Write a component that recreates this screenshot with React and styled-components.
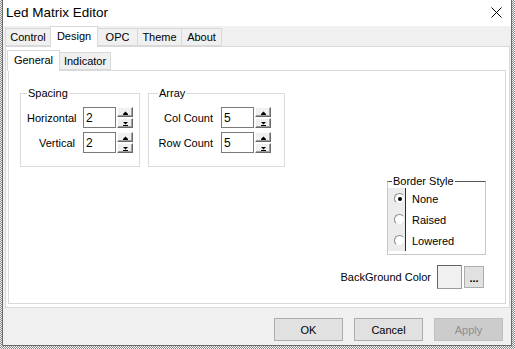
import React from "react";
import styled, { createGlobalStyle } from "styled-components";

const Global = createGlobalStyle`
  html, body { margin: 0; padding: 0; }
  body {
    width: 515px; height: 349px; overflow: hidden;
    background: repeating-conic-gradient(#8a8a8a 0 25%, #f4f4f4 0 50%) 0 0 / 2px 2px;
    font-family: "Liberation Sans", Arial, sans-serif;
  }
  * { box-sizing: border-box; }
`;

const Window = styled.div`
  margin-left: 2px;
  width: 510px;
  height: 346px;
  background: #f0f0f0;
  border: 1px solid #6a6a6a;
  border-top: none;
  display: flex;
  flex-direction: column;
`;

const TitleBar = styled.div`
  height: 26px;
  background: #fff;
  display: flex;
  align-items: center;
  justify-content: space-between;
  padding: 0 8px 1px 3px;
  font-size: 13.5px;
  color: #000;
`;

const CloseIcon = styled.svg`
  width: 11px;
  height: 11px;
  margin-right: 1px;
`;

const TabStrip = styled.div`
  display: flex;
  align-items: flex-end;
  height: ${p => p.$h}px;
  padding-left: ${p => p.$pl}px;
  margin-left: ${p => p.$ml || 0}px;
  position: relative;
  z-index: 1;
`;

const Tab = styled.div`
  width: ${p => p.$w}px;
  height: ${p => (p.$active ? p.$h + 1 : p.$h - 2)}px;
  margin-right: -1px;
  margin-bottom: ${p => (p.$active ? -1 : 0)}px;
  background: ${p => (p.$active ? "#fff" : "#f0f0f0")};
  border: 1px solid #d9d9d9;
  border-bottom: ${p => (p.$active ? "none" : "1px solid #d9d9d9")};
  font-size: 11px;
  color: #000;
  display: flex;
  align-items: ${p => (p.$active ? "flex-start" : "center")};
  padding-top: ${p => (p.$active ? 3 : 0)}px;
  justify-content: center;
  position: relative;
  z-index: ${p => (p.$active ? 2 : 1)};
  line-height: 13px;
`;

const OuterPanel = styled.div`
  margin: 0 1px 0 2px;
  height: 262px;
  background: #fff;
  border: 1px solid #d9d9d9;
  padding: 3px 3px 3px 2px;
  display: flex;
  flex-direction: column;
`;

const InnerPanel = styled.div`
  flex: 1;
  border: 1px solid #d9d9d9;
  background: #fff;
  padding: 16px 19px 0 11px;
  display: flex;
  flex-direction: column;
`;

const TopRow = styled.div`
  display: flex;
  gap: 8px;
`;

const Group = styled.fieldset`
  margin: 0;
  width: ${p => p.$w}px;
  height: ${p => p.$h}px;
  border: 1px solid #dcdcdc;
  padding: 8px 0 0 ${p => p.$pl}px;
  min-width: 0;
  display: flex;
  flex-direction: column;
  gap: 4px;
`;

const Legend = styled.legend`
  font-size: 11px;
  line-height: 12px;
  padding: 0 1px;
  margin-left: ${p => p.$ml || 0}px;
  color: #000;
`;

const FieldRow = styled.div`
  display: flex;
  align-items: center;
  height: 21px;
`;

const Label = styled.span`
  width: ${p => p.$w}px;
  text-align: right;
  font-size: 11px;
  color: #000;
  margin-right: 8px;
`;

const NumBox = styled.input`
  width: 33px;
  height: 21px;
  border: 1px solid #7a7a7a;
  font-family: "Liberation Sans", Arial, sans-serif;
  font-size: 12px;
  padding: 0 0 0 2px;
  color: #000;
  background: #fff;
  outline: none;
`;

const Spinner = styled.div`
  margin-left: 1px;
  width: 16px;
  height: 21px;
  display: flex;
  flex-direction: column;
  gap: 1px;
`;

const SpinBtn = styled.div`
  flex: 1;
  background: #f0f0f0;
  border-top: 1px solid #fff;
  border-left: 1px solid #fff;
  border-right: 1px solid #696969;
  border-bottom: 1px solid #696969;
  box-shadow: inset -1px -1px 0 #a0a0a0;
  display: flex;
  align-items: center;
  justify-content: center;
`;

const Arrow = ({ down }) => (
  <svg width="7" height="5" viewBox="0 0 7 5">
    {down ? (
      <>
        <polygon points="1,1 6,1 3.5,3.5" fill="#000" />
        <rect x="1" y="4" width="5" height="1" fill="#000" />
      </>
    ) : (
      <>
        <polygon points="1,4 6,4 3.5,1.5" fill="#000" />
        <rect x="1" y="4" width="5" height="1" fill="#000" />
      </>
    )}
  </svg>
);

const SpinField = ({ label, labelWidth, value }) => (
  <FieldRow>
    <Label $w={labelWidth}>{label}</Label>
    <NumBox defaultValue={value} readOnly />
    <Spinner>
      <SpinBtn><Arrow /></SpinBtn>
      <SpinBtn><Arrow down /></SpinBtn>
    </Spinner>
  </FieldRow>
);

const RightColumn = styled.div`
  align-self: flex-end;
  margin-top: 8px;
  display: flex;
  flex-direction: column;
  align-items: flex-end;
`;

const BorderGroup = styled.fieldset`
  margin: 0;
  width: 99px;
  height: 80px;
  padding: 1px 0 0 0;
  min-width: 0;
  border: 1px solid #c8c8c8;
  border-top-color: #555;
  display: flex;
  flex-direction: column;
`;

const RadioList = styled.div`
  display: flex;
  flex-direction: column;
  background: linear-gradient(to right, #ececec 0 17px, #2a2a2a 17px 18px, #fff 18px);
`;

const RadioRow = styled.div`
  height: 21px;
  display: flex;
  align-items: center;
  font-size: 11px;
  color: #000;
`;

const RadioCircle = styled.span`
  width: 11px;
  height: 11px;
  margin-left: 6px;
  border-radius: 50%;
  background: #fff;
  border: 1px solid;
  border-color: #8a8a8a #e8e8e8 #e8e8e8 #8a8a8a;
  display: flex;
  align-items: center;
  justify-content: center;
  flex-shrink: 0;
`;

const Dot = styled.span`
  width: 4px;
  height: 4px;
  border-radius: 50%;
  background: #000;
`;

const RadioText = styled.span`
  margin-left: 7px;
`;

const ColorRow = styled.div`
  margin-top: 10px;
  margin-right: 2px;
  display: flex;
  align-items: center;
`;

const ColorLabel = styled.span`
  font-size: 11px;
  color: #000;
  margin-right: 6px;
`;

const Swatch = styled.div`
  width: 25px;
  height: 24px;
  background: #f0f0f0;
  border: 1px solid #646464;
  border-right-color: #9a9a9a;
  border-bottom-color: #9a9a9a;
`;

const DotsButton = styled.div`
  margin-left: 2px;
  width: 20px;
  height: 22px;
  background: #e1e1e1;
  border: 1px solid #adadad;
  font-size: 11px;
  font-weight: bold;
  display: flex;
  align-items: flex-end;
  justify-content: center;
  padding-bottom: 5px;
  line-height: 8px;
  color: #000;
`;

const Footer = styled.div`
  flex: 1;
  display: flex;
  justify-content: flex-end;
  align-items: flex-start;
  gap: 11px;
  padding: 10px 8px 0 0;
`;

const Button = styled.div`
  width: 69px;
  height: 23px;
  display: flex;
  align-items: center;
  justify-content: center;
  font-size: 11px;
  background: ${p => (p.$disabled ? "#cccccc" : "#e1e1e1")};
  border: 1px solid ${p => (p.$disabled ? "#bfbfbf" : "#adadad")};
  color: ${p => (p.$disabled ? "#8e8e8e" : "#000")};
`;

const outerTabs = [
  { label: "Control", w: 46 },
  { label: "Design", w: 48, active: true },
  { label: "OPC", w: 41 },
  { label: "Theme", w: 45 },
  { label: "About", w: 41 },
];

const innerTabs = [
  { label: "General", w: 53, active: true },
  { label: "Indicator", w: 52 },
];

export default function App() {
  return (
    <>
      <Global />
      <Window>
        <TitleBar>
          <span>Led Matrix Editor</span>
          <CloseIcon viewBox="0 0 11 11">
            <path d="M0.5 0.5 L10.5 10.5 M10.5 0.5 L0.5 10.5" stroke="#000" strokeWidth="1" fill="none" />
          </CloseIcon>
        </TitleBar>
        <TabStrip $h={20} $pl={2}>
          {outerTabs.map(t => (
            <Tab key={t.label} $w={t.w} $h={20} $active={t.active}>{t.label}</Tab>
          ))}
        </TabStrip>
        <OuterPanel>
          <TabStrip $h={20} $pl={0} $ml={-1}>
            {innerTabs.map(t => (
              <Tab key={t.label} $w={t.w} $h={20} $active={t.active}>{t.label}</Tab>
            ))}
          </TabStrip>
          <InnerPanel>
            <TopRow>
              <Group $w={120} $h={80} $pl={6}>
                <Legend>Spacing</Legend>
                <SpinField label="Horizontal" labelWidth={48} value="2" />
                <SpinField label="Vertical" labelWidth={48} value="2" />
              </Group>
              <Group $w={137} $h={80} $pl={9}>
                <Legend>Array</Legend>
                <SpinField label="Col Count" labelWidth={55} value="5" />
                <SpinField label="Row Count" labelWidth={55} value="5" />
              </Group>
            </TopRow>
            <RightColumn>
              <BorderGroup>
                <Legend $ml={4}>Border Style</Legend>
                <RadioList>
                  <RadioRow><RadioCircle><Dot /></RadioCircle><RadioText>None</RadioText></RadioRow>
                  <RadioRow><RadioCircle /><RadioText>Raised</RadioText></RadioRow>
                  <RadioRow><RadioCircle /><RadioText>Lowered</RadioText></RadioRow>
                </RadioList>
              </BorderGroup>
              <ColorRow>
                <ColorLabel>BackGround Color</ColorLabel>
                <Swatch />
                <DotsButton>...</DotsButton>
              </ColorRow>
            </RightColumn>
          </InnerPanel>
        </OuterPanel>
        <Footer>
          <Button>OK</Button>
          <Button>Cancel</Button>
          <Button $disabled>Apply</Button>
        </Footer>
      </Window>
    </>
  );
}
